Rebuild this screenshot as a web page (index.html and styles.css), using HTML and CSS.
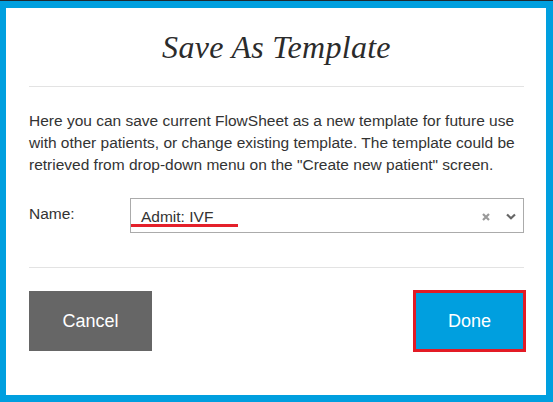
FILE: index.html
```html
<!DOCTYPE html>
<html>
<head>
<meta charset="utf-8">
<link rel="stylesheet" href="styles.css">
</head>
<body>
<div class="page">
  <div class="dialog">
    <h1 class="title">Save As Template</h1>
    <hr class="rule rule-top">
    <p class="desc">Here you can save current FlowSheet as a new template for future use<br>with other patients, or change existing template. The template could be<br>retrieved from drop-down menu on the "Create new patient" screen.</p>
    <div class="field">
      <label class="label">Name:</label>
      <div class="select">
        <span class="value">Admit: IVF</span>
        <span class="mark"></span>
        <span class="clear">
          <svg width="8" height="8" viewBox="0 0 8 8"><path d="M1 1L7 7M7 1L1 7" stroke="#9a9a9a" stroke-width="2.2" stroke-linecap="butt"/></svg>
        </span>
        <span class="arrow">
          <svg width="10" height="7" viewBox="0 0 10 7"><path d="M1 1.5L5 5.3L9 1.5" fill="none" stroke="#666" stroke-width="2.2"/></svg>
        </span>
      </div>
    </div>
    <hr class="rule rule-bottom">
    <div class="actions">
      <button class="btn btn-cancel">Cancel</button>
      <button class="btn btn-done">Done</button>
    </div>
  </div>
</div>
</body>
</html>
```
FILE: styles.css
```css
html, body {
  margin: 0;
  padding: 0;
  background: #ffffff;
}
.page {
  width: 553px;
  height: 402px;
  box-sizing: border-box;
  border-top: 1px solid #1e2a33;
}
.dialog {
  box-sizing: border-box;
  height: 401px;
  border: 7px solid #009fdf;
  border-left-width: 6px;
  background: #fff;
  padding: 21px 22px 0 23px;
  font-family: "Liberation Sans", Arial, sans-serif;
  color: #333;
}
.title {
  margin: 0;
  font-family: "Liberation Serif", "Times New Roman", serif;
  font-style: italic;
  font-weight: normal;
  font-size: 32px;
  line-height: 36px;
  letter-spacing: 0.3px;
  text-align: center;
  color: #2b2b2b;
}
.rule {
  border: 0;
  height: 1px;
  background: #e3e3e3;
  margin: 0;
}
.rule-top {
  margin-top: 21px;
}
.desc {
  margin: 23px 0 0 0;
  font-size: 15.5px;
  line-height: 22px;
  white-space: nowrap;
}
.field {
  display: flex;
  margin-top: 22px;
}
.label {
  width: 101px;
  flex: none;
  font-size: 15.5px;
  line-height: 17px;
  margin-top: 7px;
}
.select {
  position: relative;
  flex: 1;
  height: 35px;
  box-sizing: border-box;
  border: 1px solid #ababab;
  display: flex;
  align-items: center;
  padding: 2px 0 0 10px;
}
.value {
  flex: 1;
  font-size: 15.5px;
  line-height: 17px;
  color: #333;
}
.mark {
  position: absolute;
  left: 0;
  top: 25px;
  width: 107px;
  height: 3px;
  background: #e4202a;
}
.clear {
  display: flex;
  margin-right: 16px;
}
.arrow {
  display: flex;
  margin-right: 7px;
}
.rule-bottom {
  margin-top: 34px;
}
.actions {
  display: flex;
  justify-content: space-between;
  align-items: center;
  margin-top: 22px;
}
.btn {
  border: 0;
  font-family: "Liberation Sans", Arial, sans-serif;
  font-size: 18px;
  color: #fff;
  cursor: pointer;
  padding: 0;
}
.btn-cancel {
  width: 123px;
  height: 60px;
  background: #666666;
}
.btn-done {
  width: 113px;
  height: 62px;
  background: #009fdf;
  border: 3px solid #e31b25;
  margin-right: -2px;
}
```
